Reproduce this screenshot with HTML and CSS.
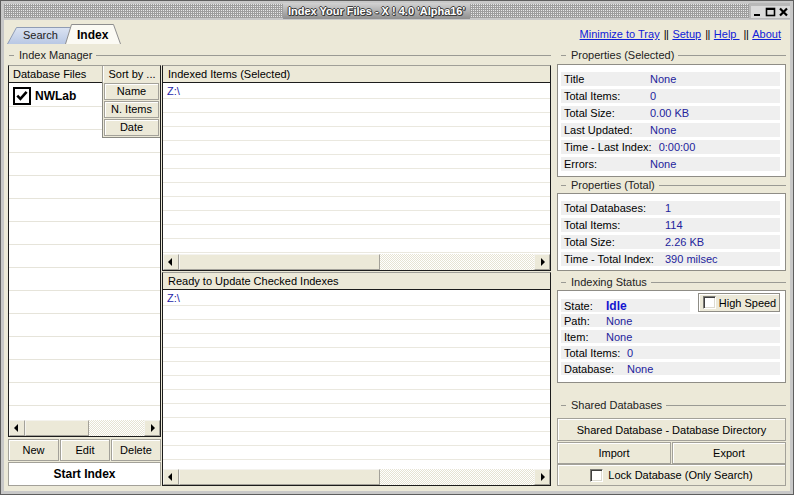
FILE: index.html
```html
<!DOCTYPE html>
<html>
<head>
<meta charset="utf-8">
<title>Index Your Files</title>
<link rel="stylesheet" href="styles.css">
</head>
<body>
<div class="window">
  <div class="titlebar">
    <div class="dots"></div>
    <div class="title">Index Your Files - X ! 4.0 'Alpha16'</div>
    <div class="dots"></div>
    <div class="wbtns">
      <span class="wbtn"><svg width="13" height="12" viewBox="0 0 13 12"><rect x="3" y="8" width="6" height="2" fill="#000"/></svg></span>
      <span class="wbtn"><svg width="13" height="12" viewBox="0 0 13 12"><rect x="2.5" y="2.5" width="8" height="7" fill="none" stroke="#000" stroke-width="1.6"/><rect x="2" y="2" width="9" height="2" fill="#000"/></svg></span>
      <span class="wbtn"><svg width="13" height="12" viewBox="0 0 13 12"><path d="M3 2.5 L10 9.5 M10 2.5 L3 9.5" stroke="#000" stroke-width="2.2"/></svg></span>
    </div>
  </div>

  <div class="client">
    <div class="toprow">
      <div class="tabs">
        <div class="tab tab-search">
          <svg class="tabshape" viewBox="0 0 66 17" preserveAspectRatio="none">
            <defs><linearGradient id="sg" x1="0" y1="0" x2="0" y2="1"><stop offset="0" stop-color="#dbe3f2"/><stop offset="1" stop-color="#b9c8e4"/></linearGradient></defs>
            <path d="M0.5 17 L9.5 0.5 L65.5 0.5 L65.5 17" fill="url(#sg)" stroke="#8f9cb4"/>
          </svg>
          <span class="tabtext">Search</span>
        </div>
        <div class="tab tab-index">
          <svg class="tabshape" viewBox="0 0 56 20" preserveAspectRatio="none">
            <path d="M0.5 20 L6.5 0.5 L48.5 0.5 L55.5 20" fill="#fbfaf4" stroke="#8e8e8e"/>
          </svg>
          <span class="tabtext">Index</span>
        </div>
      </div>
      <div class="links">
        <a class="link">Minimize to Tray</a><span class="sep">||</span><a class="link">Setup</a><span class="sep">||</span><a class="link">Help&nbsp;</a><span class="sep">||</span><a class="link">About</a>
      </div>
    </div>

    <div class="main">
      <div class="manager">
        <div class="glabel glabel-left"><span class="gtext">Index Manager</span></div>
        <div class="cols">
          <div class="leftcol">
            <div class="panel dbpanel">
              <div class="phead">
                <div class="hcell">Database Files</div>
                <div class="hbtn">Sort by ...</div>
              </div>
              <div class="list dblist">
                <div class="dbrow">
                  <span class="bigcheck"><svg width="18" height="18" viewBox="0 0 18 18"><rect x="1" y="1" width="16" height="16" fill="#fff" stroke="#000" stroke-width="2"/><path d="M4.3 8.6 L7.4 11.8 L13.6 4.8" fill="none" stroke="#000" stroke-width="2.6"/></svg></span>
                  <span class="dbname">NWLab</span>
                </div>
              </div>
              <div class="hscroll">
                <div class="sb-btn"><span class="arr-l"></span></div>
                <div class="sb-thumb thumb-left"></div>
                <div class="sb-track"></div>
                <div class="sb-btn"><span class="arr-r"></span></div>
              </div>
              <div class="sortmenu">
                <div class="sortbtn">Name</div>
                <div class="sortbtn">N. Items</div>
                <div class="sortbtn">Date</div>
              </div>
            </div>
            <div class="btnrow">
              <div class="btn btn-new">New</div>
              <div class="btn btn-edit">Edit</div>
              <div class="btn btn-del">Delete</div>
            </div>
            <div class="startbtn">Start Index</div>
          </div>

          <div class="midcol">
            <div class="panel toppanel">
              <div class="phead"><div class="htext">Indexed Items (Selected)</div></div>
              <div class="list ilist">
                <div class="irow">Z:\</div>
              </div>
              <div class="hscroll">
                <div class="sb-btn"><span class="arr-l"></span></div>
                <div class="sb-thumb thumb-mid"></div>
                <div class="sb-track"></div>
                <div class="sb-btn"><span class="arr-r"></span></div>
              </div>
            </div>
            <div class="panel botpanel">
              <div class="phead"><div class="htext">Ready to Update Checked Indexes</div></div>
              <div class="list ilist">
                <div class="irow">Z:\</div>
              </div>
              <div class="hscroll">
                <div class="sb-btn"><span class="arr-l"></span></div>
                <div class="sb-thumb thumb-mid"></div>
                <div class="sb-track"></div>
                <div class="sb-btn"><span class="arr-r"></span></div>
              </div>
            </div>
          </div>
        </div>
      </div>

      <div class="right">
        <div class="glabel glabel-right"><span class="gtext">Properties (Selected)</span></div>
        <div class="box box-sel">
          <div class="prow"><span class="lab">Title</span><span class="val">None</span></div>
          <div class="prow"><span class="lab">Total Items:</span><span class="val">0</span></div>
          <div class="prow"><span class="lab">Total Size:</span><span class="val">0.00 KB</span></div>
          <div class="prow"><span class="lab">Last Updated:</span><span class="val">None</span></div>
          <div class="prow"><span class="lab">Time - Last Index:</span><span class="val">0:00:00</span></div>
          <div class="prow"><span class="lab">Errors:</span><span class="val">None</span></div>
        </div>

        <div class="glabel glabel-right"><span class="gtext">Properties (Total)</span></div>
        <div class="box box-tot">
          <div class="prow"><span class="lab">Total Databases:</span><span class="val">1</span></div>
          <div class="prow"><span class="lab">Total Items:</span><span class="val">114</span></div>
          <div class="prow"><span class="lab">Total Size:</span><span class="val">2.26 KB</span></div>
          <div class="prow"><span class="lab">Time - Total Index:</span><span class="val">390 milsec</span></div>
        </div>

        <div class="glabel glabel-right glabel-idx"><span class="gtext">Indexing Status</span></div>
        <div class="box box-idx">
          <div class="staterow">
            <div class="srow srow-state"><span class="lab lab-s">State:</span><span class="val val-idle">Idle</span></div>
            <div class="hispeed"><span class="chk"></span><span>High Speed</span></div>
          </div>
          <div class="srow srow-first"><span class="lab lab-s">Path:</span><span class="val">None</span></div>
          <div class="srow"><span class="lab lab-s">Item:</span><span class="val">None</span></div>
          <div class="srow"><span class="lab lab-l">Total Items:</span><span class="val">0</span></div>
          <div class="srow"><span class="lab lab-l">Database:</span><span class="val">None</span></div>
        </div>

        <div class="glabel glabel-right glabel-shared"><span class="gtext">Shared Databases</span></div>
        <div class="btn rbtn rbtn-dir">Shared Database - Database Directory</div>
        <div class="ierow">
          <div class="btn rbtn">Import</div>
          <div class="btn rbtn">Export</div>
        </div>
        <div class="btn rbtn rbtn-lock"><span class="chk"></span><span>Lock Database (Only Search)</span></div>
      </div>
    </div>
  </div>
</div>
</body>
</html>
```

FILE: styles.css
```css
* { box-sizing: border-box; }
html, body { margin: 0; padding: 0; }
body {
  width: 794px;
  height: 495px;
  overflow: hidden;
  font-family: "Liberation Sans", Arial, sans-serif;
  font-size: 11px;
  color: #000;
  background: #ece9d8;
}

/* window frame */
.window {
  width: 794px;
  height: 495px;
  border: 1px solid #5e5e5e;
  background: #c8c8c8;
  padding: 2px 3px 3px 3px;
  display: flex;
  flex-direction: column;
}
.titlebar {
  height: 16px;
  flex: none;
  display: flex;
}
.dots {
  flex: 1;
  margin: 1px 0;
  background: repeating-conic-gradient(#e8e8e8 0 25%, #9e9e9e 0 100%) 0 0 / 2px 2px;
}
.title {
  padding: 0 5px;
  background: linear-gradient(#d2d2d2, #8f8f8f);
  color: #fff;
  font-weight: bold;
  font-size: 11px;
  line-height: 16px;
  white-space: nowrap;
  text-shadow: 1px 0 #3c3c3c, -1px 0 #3c3c3c, 0 1px #3c3c3c, 0 -1px #3c3c3c, 1px 1px #3c3c3c;
}
.wbtns {
  display: flex;
  gap: 0;
  padding: 3px 0 1px 2px;
  background: #b8b8b8;
}
.wbtn {
  width: 13px;
  height: 12px;
  background: #dadada;
  display: flex;
}

/* client */
.client {
  flex: 1;
  margin-top: 1px;
  background: #ece9d8;
  padding: 0 4px 4px 4px;
  display: flex;
  flex-direction: column;
}
.toprow {
  height: 27px;
  flex: none;
  display: flex;
  justify-content: space-between;
}
.tabs {
  display: flex;
  align-items: flex-end;
  margin-left: -1px;
  margin-bottom: 3px;
}
.tab {
  position: relative;
  height: 17px;
  line-height: 17px;
}
.tabshape {
  position: absolute;
  left: 0;
  top: 0;
  width: 100%;
  height: 100%;
}
.tabtext { position: relative; }
.tab-search {
  width: 66px;
  padding-left: 16px;
  font-size: 11px;
  color: #222;
}
.tab-index {
  width: 56px;
  height: 20px;
  margin-left: -8px;
  padding-left: 12px;
  padding-top: 3px;
  font-size: 12px;
  font-weight: bold;
}
.links {
  margin-top: 8px;
  margin-right: 5px;
  line-height: 13px;
  display: flex;
  white-space: nowrap;
}
.link {
  color: #1020d8;
  text-decoration: underline;
}
.sep {
  margin: 0 4px;
  letter-spacing: -0.5px;
}

.main {
  height: 439px;
  flex: none;
  display: flex;
  gap: 6px;
}

/* group label lines */
.glabel {
  height: 16px;
  flex: none;
  display: flex;
  align-items: center;
  color: #222;
}
.glabel::before {
  content: "";
  width: 5px;
  border-top: 1px solid #9a9a94;
}
.glabel::after {
  content: "";
  flex: 1;
  border-top: 1px solid #9a9a94;
}
.gtext { padding: 0 4px 0 5px; }
.glabel-left { padding-left: 1px; }
.glabel-right { padding-left: 4px; }

.manager {
  width: 543px;
  display: flex;
  flex-direction: column;
}
.cols {
  flex: 1;
  margin-top: 2px;
  display: flex;
  gap: 1px;
}

/* panels */
.panel {
  border: 1px solid #1c1c1c;
  border-top-color: #a09f98;
  background: #fff;
  display: flex;
  flex-direction: column;
  position: relative;
}
.phead {
  height: 17px;
  flex: none;
  background: #ece9d8;
  border-bottom: 1px solid #1c1c1c;
  display: flex;
  line-height: 16px;
}
.hcell {
  flex: 1;
  padding-left: 4px;
  border-right: 1px solid #a6a49a;
}
.hbtn {
  width: 57px;
  text-align: center;
  border-left: 1px solid #fff;
}
.htext { padding-left: 5px; }

.list { flex: 1; }
.dblist {
  background: repeating-linear-gradient(to bottom, transparent 0 22px, #e6e4da 22px 23px);
  background-position: 0 1px;
}
.ilist {
  background: repeating-linear-gradient(to bottom, transparent 0 13px, #eae8df 13px 14px);
  background-position: 0 2px;
}
.dbrow {
  height: 23px;
  display: flex;
  align-items: center;
  padding: 2px 0 0 4px;
  gap: 4px;
}
.bigcheck { display: flex; }
.dbname { font-weight: bold; font-size: 12px; }
.irow {
  padding: 2px 0 0 4px;
  line-height: 13px;
  color: #2626a8;
}

/* sort overlay */
.sortmenu {
  position: absolute;
  top: 16px;
  right: 0;
  width: 58px;
  background: #ece9d8;
  border-left: 1px solid #8a8a84;
  border-bottom: 1px solid #8a8a84;
  padding: 1px 1px 1px 1px;
  display: flex;
  flex-direction: column;
  gap: 1px;
}
.sortbtn {
  height: 17px;
  line-height: 15px;
  text-align: center;
  border: 1px solid #a3a199;
  box-shadow: inset 1px 1px #fff;
  background: #ece9d8;
}

/* scrollbars */
.hscroll {
  height: 16px;
  flex: none;
  display: flex;
}
.sb-btn, .sb-thumb {
  background: #ece9d8;
  border: 1px solid;
  border-color: #f4f3ee #a3a199 #a3a199 #f4f3ee;
}
.sb-btn {
  width: 16px;
  display: flex;
  align-items: center;
  justify-content: center;
}
.sb-thumb { flex: none; }
.thumb-left { width: 64px; }
.thumb-mid { width: 201px; }
.sb-track {
  flex: 1;
  background: repeating-conic-gradient(#ffffff 0 25%, #e6e3d3 0 50%) 0 0 / 2px 2px;
}
.arr-l, .arr-r {
  width: 0;
  height: 0;
  border-top: 4px solid transparent;
  border-bottom: 4px solid transparent;
}
.arr-l { border-right: 4px solid #000; margin-right: 2px; }
.arr-r { border-left: 4px solid #000; margin-left: 2px; }

.leftcol {
  width: 153px;
  display: flex;
  flex-direction: column;
}
.dbpanel { flex: 1; }
.btnrow {
  height: 22px;
  flex: none;
  margin-top: 2px;
  display: flex;
  gap: 1px;
}
.btn {
  background: #ece9d8;
  border: 1px solid #a3a199;
  box-shadow: inset 1px 1px #fff;
  display: flex;
  align-items: center;
  justify-content: center;
  white-space: nowrap;
}
.btn-new { width: 51px; }
.btn-edit { width: 50px; }
.btn-del { width: 50px; }
.startbtn {
  height: 24px;
  flex: none;
  margin-top: 1px;
  background: #fff;
  border: 1px solid #a3a199;
  font-weight: bold;
  font-size: 12px;
  display: flex;
  align-items: center;
  justify-content: center;
}

.midcol {
  width: 389px;
  display: flex;
  flex-direction: column;
  gap: 1px;
}
.toppanel { height: 206px; flex: none; }
.botpanel { flex: 1; }

/* right column */
.right {
  width: 229px;
  display: flex;
  flex-direction: column;
}
.box {
  flex: none;
  background: #fff;
  border: 1px solid #8f8d86;
  padding: 7px 5px 0 3px;
}
.box-sel { height: 113px; margin-top: 1px; }
.box-tot { height: 78px; }
.glabel-idx { margin-top: 3px; }
.box-idx { height: 93px; padding-top: 1px; }
.prow, .srow {
  background: #efefef;
  display: flex;
  align-items: center;
  padding-left: 3px;
  white-space: nowrap;
}
.prow { height: 14px; margin-bottom: 3px; }
.srow { height: 13px; margin-bottom: 3px; }
.srow-first { margin-top: 2px; }
.box-sel .lab { min-width: 86px; padding-right: 7px; }
.box-tot .lab { width: 101px; }
.lab-s { width: 42px; }
.lab-l { width: 63px; }
.val { color: #23239c; }
.val-idle { color: #1414d0; font-weight: bold; font-size: 12px; }

.staterow {
  display: flex;
  align-items: flex-end;
  height: 19px;
  margin-top: 1px;
}
.srow-state { width: 130px; margin-bottom: 0; }
.hispeed {
  width: 83px;
  height: 19px;
  margin-left: 8px;
  background: #ece9d8;
  border: 1px solid #8f8d86;
  box-shadow: inset 1px 1px #fff;
  display: flex;
  align-items: center;
  gap: 3px;
  padding-left: 4px;
  white-space: nowrap;
  align-self: flex-start;
}
.chk {
  width: 13px;
  height: 13px;
  flex: none;
  background: #fff;
  border: 1px solid;
  border-color: #7c7b75 #ffffff #ffffff #7c7b75;
  box-shadow: inset 1px 1px #404040, inset -1px -1px #dcdad0;
}

.glabel-shared { margin-top: 14px; }
.rbtn-dir { height: 23px; margin-top: 5px; flex: none; }
.ierow {
  height: 22px;
  margin-top: 1px;
  flex: none;
  display: flex;
  gap: 1px;
}
.ierow .rbtn { flex: 1; }
.rbtn-lock { height: 22px; flex: none; gap: 5px; }
```
